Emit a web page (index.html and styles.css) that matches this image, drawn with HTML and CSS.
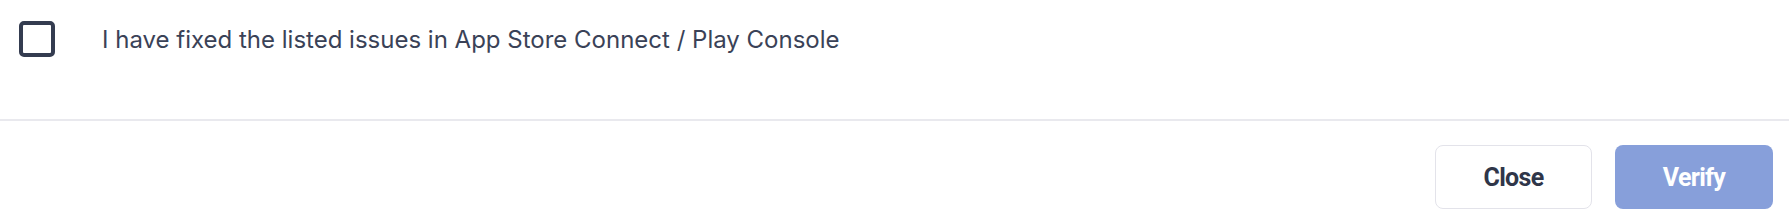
FILE: index.html
```html
<!DOCTYPE html>
<html lang="en">
<head>
    <meta charset="UTF-8">
    <meta name="viewport" content="width=device-width, initial-scale=1.0">
    <title>Verify fixes</title>
    <link rel="stylesheet" href="styles.css">
</head>
<body>
    <div class="modal">
        <div class="modal-body">
            <label class="confirm">
                <span class="checkbox"></span>
                <span class="confirm-text">I have fixed the listed issues in App Store Connect / Play Console</span>
            </label>
        </div>

        <!-- Footer actions -->
        <div class="modal-footer">
            <button type="button" class="btn btn-close">Close</button>
            <button type="button" class="btn btn-verify" disabled>Verify</button>
        </div>
    </div>
</body>
</html>
```

FILE: styles.css
```css
* {
    margin: 0;
    padding: 0;
    box-sizing: border-box;
}

body {
    background-color: #fff;
    font-family: 'Inter', 'Noto Sans', sans-serif;
}

.modal {
    width: 100%;
}

.modal-body {
    height: 121px;
    padding: 21px 19px 0;
    border-bottom: 2px solid #e9e9ee;
}

.confirm {
    display: flex;
    align-items: center;
    gap: 47px;
    cursor: pointer;
}

.checkbox {
    width: 36px;
    height: 36px;
    border: 4px solid #343c50;
    border-radius: 5px;
    flex-shrink: 0;
}

.confirm-text {
    font-size: 24px;
    color: #3a4257;
}

.modal-footer {
    display: flex;
    justify-content: flex-end;
    gap: 23px;
    padding: 24px 16px 0;
}

.btn {
    width: 157px;
    height: 64px;
    border-radius: 8px;
    font-family: 'Roboto', 'Liberation Sans', sans-serif;
    font-weight: 700;
    font-size: 25px;
    letter-spacing: -0.7px;
    cursor: pointer;
}

.btn-close {
    background-color: #fff;
    border: 1px solid #e3e3ea;
    color: #2f3649;
}

.btn-verify {
    width: 158px;
    background-color: #879fda;
    border: none;
    color: #fff;
}
```
